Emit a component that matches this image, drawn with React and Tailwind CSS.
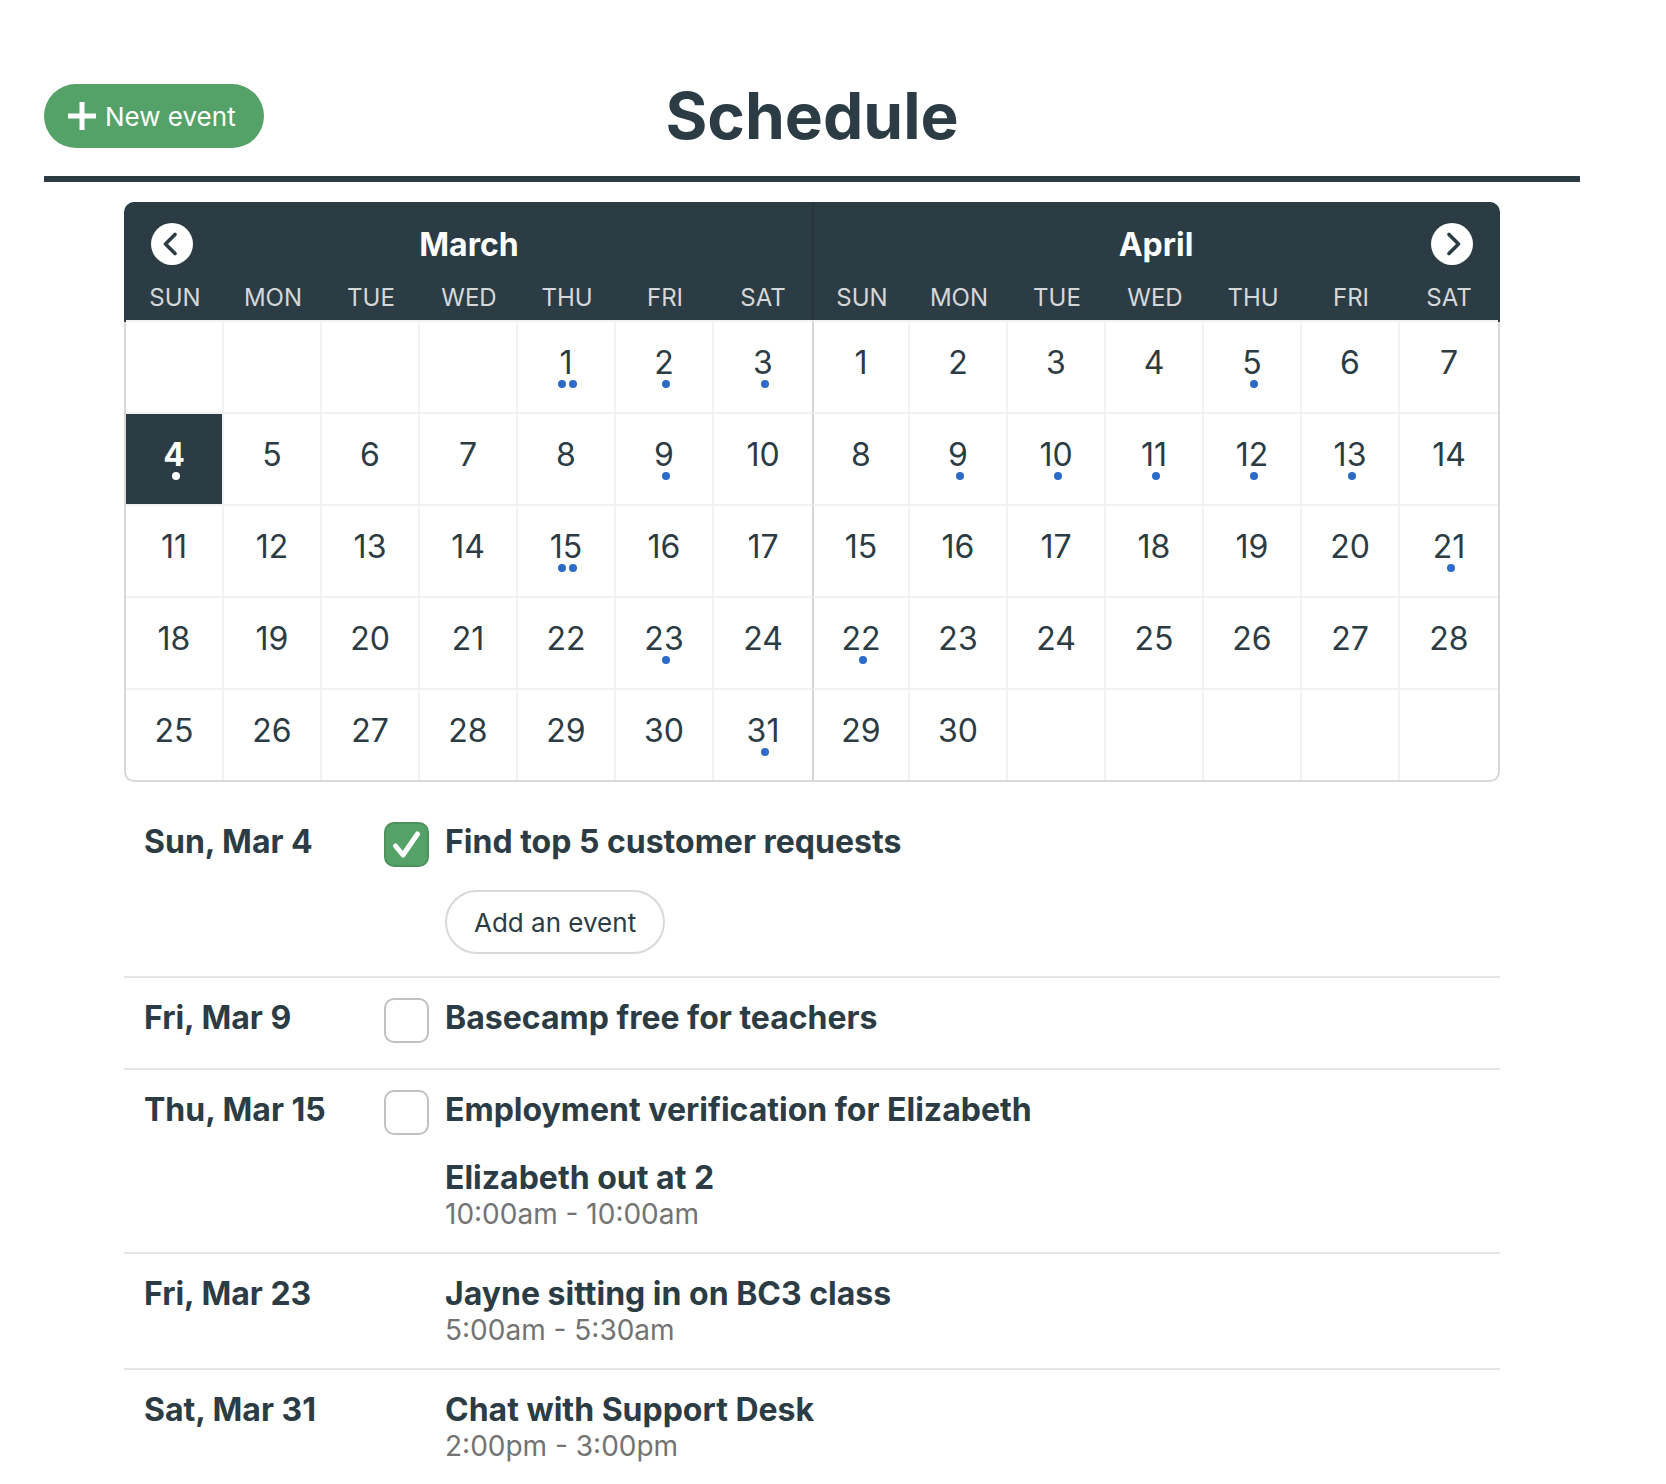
import React, { useState } from "react";

const WEEKDAYS = ["SUN", "MON", "TUE", "WED", "THU", "FRI", "SAT"];

const MONTHS = [
  { name: "March", offset: 4, days: 31, selected: 4, marks: { 1: 2, 2: 1, 3: 1, 4: 1, 9: 1, 15: 2, 23: 1, 31: 1 } },
  { name: "April", offset: 0, days: 30, selected: null, marks: { 5: 1, 9: 1, 10: 1, 11: 1, 12: 1, 13: 1, 21: 1, 22: 1 } },
];

const AGENDA = [
  { date: "Sun, Mar 4", canAdd: true, items: [{ title: "Find top 5 customer requests", todo: true, done: true }] },
  { date: "Fri, Mar 9", items: [{ title: "Basecamp free for teachers", todo: true }] },
  {
    date: "Thu, Mar 15",
    items: [
      { title: "Employment verification for Elizabeth", todo: true },
      { title: "Elizabeth out at 2", time: "10:00am - 10:00am" },
    ],
  },
  { date: "Fri, Mar 23", items: [{ title: "Jayne sitting in on BC3 class", time: "5:00am - 5:30am" }] },
  { date: "Sat, Mar 31", items: [{ title: "Chat with Support Desk", time: "2:00pm - 3:00pm" }] },
];

function weeksOf({ offset, days }) {
  return Array.from({ length: 5 }, (_, w) =>
    Array.from({ length: 7 }, (_, d) => {
      const n = w * 7 + d - offset + 1;
      return n >= 1 && n <= days ? n : null;
    })
  );
}

function ArrowButton({ label, side }) {
  return (
    <button
      type="button"
      aria-label={label}
      className={
        "absolute top-[21px] flex size-[42px] items-center justify-center rounded-full bg-white text-[#2c3c44] " +
        (side === "left" ? "left-[27px]" : "right-[27px]")
      }
    >
      <svg width="42" height="42" viewBox="0 0 42 42" fill="none" stroke="currentColor" strokeWidth="3.6" strokeLinecap="round" strokeLinejoin="round" aria-hidden="true">
        <path d={side === "left" ? "M24 11.5 L14.5 21 L24 30.5" : "M18 11.5 L27.5 21 L18 30.5"} />
      </svg>
    </button>
  );
}

function Day({ n, marks, selected }) {
  return (
    <button type="button" className={"flex h-full w-full flex-col items-center pt-[21px] " + (selected ? "font-bold text-white" : "")}>
      <span className="leading-10">{n}</span>
      <span className="-mt-[3px] flex h-2 gap-[3px] pl-[3px]">
        {Array.from({ length: marks || 0 }, (_, i) => (
          <span key={i} className={"size-2 rounded-full " + (selected ? "bg-white" : "bg-[#2d6bc8]")} />
        ))}
      </span>
    </button>
  );
}

function Month({ month, divided }) {
  const headEdge = divided ? " first:border-l-2 first:border-l-[#26343b]" : "";
  const bodyEdge = divided ? " first:border-l-2 first:border-l-[#d3d5d6]" : "";
  return (
    <section>
      <div className={"flex h-[63px] items-end justify-center bg-[#2c3c44] " + (divided ? "border-l-2 border-[#26343b]" : "")}>
        <h2 className="text-[32px] leading-10 font-bold text-white">{month.name}</h2>
      </div>
      <table aria-label={month.name} className="w-full table-fixed border-separate border-spacing-0">
        <thead>
          <tr>
            {WEEKDAYS.map((d) => (
              <th key={d} scope="col" className={"h-[55px] bg-[#2c3c44] pt-[11px] text-2xl leading-8 font-normal text-[#d5d8da]" + headEdge}>
                {d}
              </th>
            ))}
          </tr>
        </thead>
        <tbody>
          {weeksOf(month).map((week, w) => (
            <tr key={w}>
              {week.map((n, d) => (
                <td
                  key={d}
                  className={
                    "h-[92px] border-t-2 border-r-2 border-t-[#f2f2f2] border-r-[#f2f2f2] p-0 text-[32px] last:border-r-0 " +
                    (n && n === month.selected ? "bg-[#2c3c44]" : "bg-white") +
                    bodyEdge
                  }
                >
                  {n && <Day n={n} marks={month.marks[n]} selected={n === month.selected} />}
                </td>
              ))}
            </tr>
          ))}
        </tbody>
      </table>
    </section>
  );
}

function Todo({ title, done }) {
  const [checked, setChecked] = useState(!!done);
  return (
    <label className="-ml-[61px] flex h-[50px] items-start gap-4">
      <span className="relative size-[45px] shrink-0">
        <input
          type="checkbox"
          checked={checked}
          onChange={(e) => setChecked(e.target.checked)}
          className="peer block size-[45px] appearance-none rounded-[10px] border-2 border-[#c1c1c1] bg-white checked:border-[#4b925d] checked:bg-[#55a268]"
        />
        <svg viewBox="0 0 45 45" className="pointer-events-none absolute inset-0 hidden peer-checked:block" fill="none" stroke="#fff" strokeWidth="5" strokeLinecap="round" strokeLinejoin="round" aria-hidden="true">
          <path d="M11.5 24 L19 33 L33.5 12" />
        </svg>
      </span>
      <span className="text-[32px] leading-10 font-bold">{title}</span>
    </label>
  );
}

export default function App() {
  return (
    <main className="bg-white pt-21 pr-[86px] pl-11 font-['Inter','Liberation_Sans',sans-serif] text-[#2c3c44]">
      <header className="grid grid-cols-[1fr_auto_1fr] items-center border-b-[6px] border-[#2c3c44] pb-7">
        <button type="button" className="flex h-16 items-center gap-[9px] justify-self-start rounded-full bg-[#55a268] pr-7 pl-6 text-[26px] text-white">
          <svg width="28" height="28" viewBox="0 0 28 28" stroke="currentColor" strokeWidth="5" fill="none" aria-hidden="true">
            <path d="M14 0 V28 M0 14 H28" />
          </svg>
          New event
        </button>
        <h1 className="text-[64px] leading-15 font-bold">Schedule</h1>
      </header>

      <div className="mx-20 mt-5">
        <div className="relative rounded-[10px] bg-[linear-gradient(#2c3c44_120px,#d9d9d9_0)] px-0.5 pb-0.5">
          <div className="grid grid-cols-2 overflow-hidden rounded-t-[10px] rounded-b-lg">
            <Month month={MONTHS[0]} />
            <Month month={MONTHS[1]} divided />
          </div>
          <ArrowButton label="Previous month" side="left" />
          <ArrowButton label="Next month" side="right" />
        </div>

        <ul className="pt-5">
          {AGENDA.map((day) => (
            <li key={day.date} className="flex border-b-2 border-[#e5e5e5] py-5 pl-5 last:border-b-0">
              <h3 className="w-[301px] shrink-0 text-[32px] leading-10 font-bold">{day.date}</h3>
              <div className="flex flex-col items-start gap-[18px]">
                {day.items.map((item) =>
                  item.todo ? (
                    <Todo key={item.title} title={item.title} done={item.done} />
                  ) : (
                    <div key={item.title}>
                      <p className="text-[32px] leading-10 font-bold">{item.title}</p>
                      <p className="pb-0.5 text-[28px] leading-8 text-[#737373]">{item.time}</p>
                    </div>
                  )
                )}
                {day.canAdd && (
                  <button type="button" className="mb-0.5 h-16 rounded-full border-2 border-[#d9d9d9] px-[27px] text-[26px]">
                    Add an event
                  </button>
                )}
              </div>
            </li>
          ))}
        </ul>
      </div>
    </main>
  );
}
